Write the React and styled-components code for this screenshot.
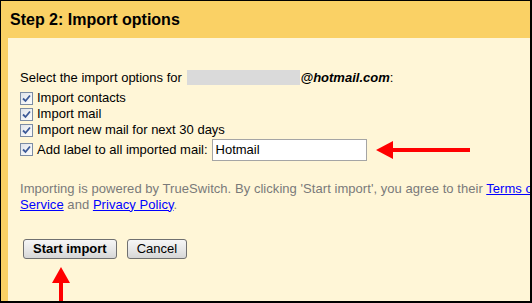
import React from "react";
import styled, { createGlobalStyle } from "styled-components";

const Global = createGlobalStyle`
  html, body { margin: 0; padding: 0; background: #fff; }
  body { font-family: "Liberation Sans", Arial, sans-serif; }
`;

const Frame = styled.div`
  position: relative;
  width: 532px;
  height: 303px;
  box-sizing: border-box;
  border-style: solid;
  border-color: #000;
  border-width: 1px 2px 2px 1px;
  overflow: hidden;
  display: flex;
  flex-direction: column;
  background: #fad165;
`;

const Header = styled.h2`
  margin: 0;
  height: 37px;
  flex: none;
  display: flex;
  align-items: center;
  padding: 1px 0 0 9px;
  box-sizing: border-box;
  font-size: 16px;
  font-weight: bold;
  color: #000;
`;

const Body = styled.div`
  flex: 1;
  margin-left: 7px;
  background: #fff6d7;
  padding: 32px 0 0 12px;
  font-size: 13px;
  line-height: 16px;
  color: #000;
  white-space: nowrap;
`;

const Intro = styled.div`
  margin-bottom: 4px;
`;

const Redacted = styled.span`
  display: inline-block;
  width: 113px;
  height: 15px;
  background: #dadada;
  vertical-align: -3px;
  margin-left: 2px;
`;

const Email = styled.span`
  font-weight: bold;
  font-style: italic;
`;

const Option = styled.label`
  display: flex;
  align-items: center;
  height: ${(p) => (p.$tall ? "22px" : "16px")};
  margin-top: ${(p) => (p.$tall ? "0.5px" : "0")};
`;

const Box = styled.span`
  width: 13px;
  height: 13px;
  flex: none;
  box-sizing: border-box;
  margin-right: 4px;
  border: 1px solid #7c8ca4;
  background: linear-gradient(135deg, #dfe3ea 0%, #f3f4f6 60%, #fbfbfb 100%);
  display: flex;
  align-items: center;
  justify-content: center;
`;

const LabelInput = styled.input`
  margin-left: 4px;
  width: 155px;
  height: 22px;
  box-sizing: border-box;
  border: 1px solid #a5a5a5;
  background: #fff;
  font-family: inherit;
  font-size: 13px;
  padding: 0 3px;
  color: #000;
  outline: none;
`;

const Terms = styled.p`
  margin: 20px 0 0;
  color: #7a7a7a;
  letter-spacing: 0.05px;
`;

const Link = styled.a`
  color: #0000ff;
  text-decoration: underline;
`;

const Actions = styled.div`
  display: flex;
  gap: 10px;
  margin: 26px 0 0 3px;
`;

const Button = styled.button`
  height: 20px;
  box-sizing: border-box;
  padding: 0 9px;
  border: 1px solid #707070;
  border-radius: 3px;
  background: linear-gradient(#f6f6f6 0%, #e8e8e8 50%, #d6d6d6 100%);
  font-family: inherit;
  font-size: 13px;
  font-weight: ${(p) => (p.$primary ? "bold" : "normal")};
  color: #000;
  line-height: 18px;
`;

const Arrow = styled.svg`
  position: absolute;
  left: ${(p) => p.$x}px;
  top: ${(p) => p.$y}px;
`;

function Check() {
  return (
    <svg width="9" height="9" viewBox="0 0 9 9">
      <path d="M1 4.5 L3.5 7 L8 1.5" fill="none" stroke="#3d5a98" strokeWidth="1.8" />
    </svg>
  );
}

function CheckOption({ children, tall }) {
  return (
    <Option $tall={tall}>
      <Box>
        <Check />
      </Box>
      {children}
    </Option>
  );
}

export default function App() {
  return (
    <>
      <Global />
      <Frame>
        <Header>Step 2: Import options</Header>
        <Body>
          <Intro>
            Select the import options for <Redacted />
            <Email>@hotmail.com</Email>:
          </Intro>
          <CheckOption>Import contacts</CheckOption>
          <CheckOption>Import mail</CheckOption>
          <CheckOption>Import new mail for next 30 days</CheckOption>
          <CheckOption tall>
            Add label to all imported mail:
            <LabelInput defaultValue="Hotmail" />
          </CheckOption>
          <Terms>
            Importing is powered by TrueSwitch. By clicking 'Start import', you agree to their{" "}
            <Link href="#">Terms of</Link>
            <br />
            <Link href="#">Service</Link> and <Link href="#">Privacy Policy</Link>.
          </Terms>
          <Actions>
            <Button $primary>Start import</Button>
            <Button>Cancel</Button>
          </Actions>
        </Body>
        <Arrow $x={374} $y={139} width="96" height="20" viewBox="0 0 96 20">
          <polygon points="1,10 18,1 18,19" fill="#ff0000" />
          <rect x="16" y="8" width="79" height="4" fill="#ff0000" />
        </Arrow>
        <Arrow $x={50} $y={265} width="20" height="40" viewBox="0 0 20 40">
          <polygon points="10,1 1,17 19,17" fill="#ff0000" />
          <rect x="8" y="15" width="4" height="25" fill="#ff0000" />
        </Arrow>
      </Frame>
    </>
  );
}
